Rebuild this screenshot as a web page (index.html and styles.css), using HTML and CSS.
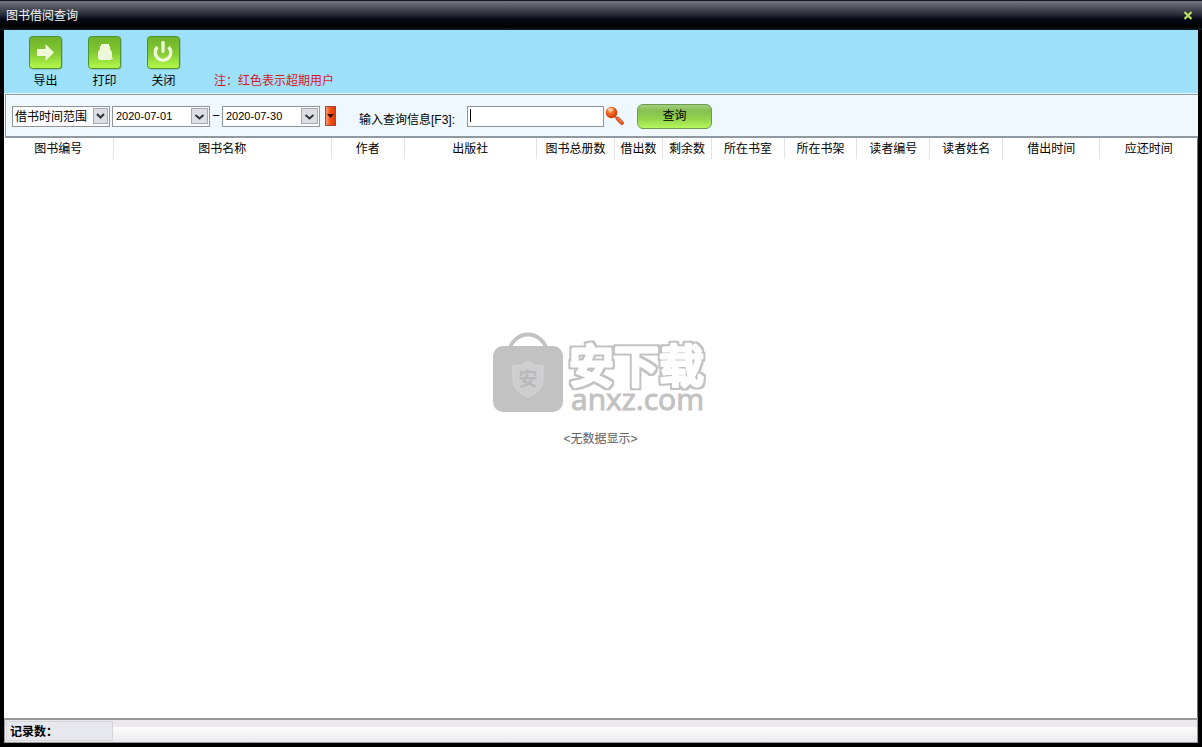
FILE: index.html
```html
<!DOCTYPE html>
<html lang="zh-CN">
<head>
<meta charset="utf-8">
<title>图书借阅查询</title>
<link rel="stylesheet" href="styles.css">
</head>
<body>
<div class="window">
  <header class="titlebar">
    <h1 class="title">图书借阅查询</h1>
    <button class="close" type="button" aria-label="关闭窗口">
      <svg width="10" height="10" viewBox="0 0 10 10"><path d="M1.500 1l7 7M8.500 1l-7 7" stroke="#bcdc62" stroke-width="2.200"/></svg>
    </button>
  </header>
  <main class="client">
    <div class="toolbar">
      <button class="tool" type="button">
        <svg class="tool-icon" width="34" height="34" viewBox="0 0 34 34">
          <defs><linearGradient id="green" x1="0" y1="0" x2="0" y2="1"><stop offset="0" stop-color="#6eb22a"/><stop offset=".5" stop-color="#82c931"/><stop offset="1" stop-color="#b4fa4c"/></linearGradient></defs>
          <rect x="1.500" y="1.500" width="32" height="32" rx="3" fill="#6e9b83" opacity=".7"/>
          <rect x=".5" y=".5" width="32" height="32" rx="3" fill="url(#green)" stroke="#4c9034"/>
          <path d="M8 13h8.500V8l8.500 8.500-8.500 8.500v-5H8z" fill="#edf8d8"/>
        </svg>
        <span>导出</span>
      </button>
      <button class="tool" type="button">
        <svg class="tool-icon" width="34" height="34" viewBox="0 0 34 34">
          <rect x="1.500" y="1.500" width="32" height="32" rx="3" fill="#6e9b83" opacity=".7"/>
          <rect x=".5" y=".5" width="32" height="32" rx="3" fill="url(#green)" stroke="#4c9034"/>
          <path d="M13 8h8v2h1v3l2 3v6h1v1h-2v1H11v-1h-1v-7l2-3v-3h1z" fill="#edf8d8"/>
        </svg>
        <span>打印</span>
      </button>
      <button class="tool" type="button">
        <svg class="tool-icon" width="34" height="34" viewBox="0 0 34 34">
          <rect x="1.500" y="1.500" width="32" height="32" rx="3" fill="#6e9b83" opacity=".7"/>
          <rect x=".5" y=".5" width="32" height="32" rx="3" fill="url(#green)" stroke="#4c9034"/>
          <path d="M10.500 11a7.800 7.800 0 1 0 11 0" fill="none" stroke="#edf8d8" stroke-width="3.400"/>
          <path d="M16 6.500v9" stroke="#edf8d8" stroke-width="3.400" stroke-linecap="round"/>
        </svg>
        <span>关闭</span>
      </button>
      <p class="note">注：红色表示超期用户</p>
    </div>
    <form class="filters" onsubmit="return false">
      <span class="combo">
        <select class="field" aria-label="时间范围类型"><option>借书时间范围</option></select>
        <svg class="arrow arrow-over" width="15" height="16" viewBox="0 0 15 16"><rect class="arrow-box" x=".5" y=".5" width="14" height="15"/><path class="arrow-mark" d="M4 6l3.500 3.500L11 6"/></svg>
      </span>
      <span class="date">
        <input class="date-input" type="text" value="2020-07-01" aria-label="开始日期">
        <button class="date-button" type="button" aria-label="选择开始日期"><svg class="arrow" width="17" height="16" viewBox="0 0 17 16"><rect class="arrow-box" x=".5" y=".5" width="16" height="15"/><path class="arrow-mark" d="M4.500 7l4 3.500 4-3.500"/></svg></button>
      </span>
      <span class="dash">–</span>
      <span class="date date-end">
        <input class="date-input" type="text" value="2020-07-30" aria-label="结束日期">
        <button class="date-button" type="button" aria-label="选择结束日期"><svg class="arrow" width="17" height="16" viewBox="0 0 17 16"><rect class="arrow-box" x=".5" y=".5" width="16" height="15"/><path class="arrow-mark" d="M4.500 7l4 3.500 4-3.500"/></svg></button>
      </span>
      <button class="range" type="button" aria-label="快速选择日期"><svg width="9" height="18" viewBox="0 0 9 18"><path d="M1 7h7L4.500 11z" fill="#3a0a00"/></svg></button>
      <label class="search-label" for="keyword">输入查询信息[F3]:</label>
      <input class="field search" id="keyword" type="text">
      <svg class="lens" width="20" height="20" viewBox="0 0 20 20">
        <defs><radialGradient id="glass" cx=".4" cy=".35" r=".65"><stop offset="0" stop-color="#ffb878"/><stop offset=".45" stop-color="#f2681c"/><stop offset="1" stop-color="#c93205"/></radialGradient></defs>
        <path d="M9.500 10.500l3 2" stroke="#d9835f" stroke-width="2"/>
        <path d="M12.500 12.500l4.500 4.500" stroke="#d9552c" stroke-width="4" stroke-linecap="round"/>
        <path d="M12.500 12l4 4" stroke="#f5a27e" stroke-width="1"/>
        <circle cx="6.500" cy="6.500" r="5.800" fill="url(#glass)"/>
        <ellipse cx="5.500" cy="3.500" rx="3" ry="1.800" fill="#ffe0c8" opacity=".65"/>
      </svg>
      <button class="query" type="submit">查询</button>
    </form>
    <section class="results">
      <table class="grid">
        <colgroup><col style="width:109px"><col style="width:218px"><col style="width:73px"><col style="width:132px"><col style="width:78px"><col style="width:48px"><col style="width:49px"><col style="width:73px"><col style="width:72px"><col style="width:73px"><col style="width:73px"><col style="width:97px"><col style="width:97px"></colgroup>
        <thead><tr><th>图书编号</th><th>图书名称</th><th>作者</th><th>出版社</th><th>图书总册数</th><th>借出数</th><th>剩余数</th><th>所在书室</th><th>所在书架</th><th>读者编号</th><th>读者姓名</th><th>借出时间</th><th>应还时间</th></tr></thead>
      </table>
      <div class="empty">
        <svg class="watermark" width="216" height="92" viewBox="0 0 216 92">
          <path d="M17 18C20 8 28 2.500 36 2.500S52 8 55 18" fill="none" stroke="#c2c2c2" stroke-width="4"/>
          <rect x="1" y="14" width="70" height="66" rx="10" fill="#c2c2c2"/>
          <path d="M36 29c5 4 10 5 15 5v14c0 8-6 13-15 17-9-4-15-9-15-17V34c5 0 10-1 15-5z" fill="#cecece" stroke="#d6d6d6"/>
          <text class="wm-badge" x="36" y="54" text-anchor="middle">安</text>
          <filter id="ring" x="-5%" y="-10%" width="110%" height="120%" color-interpolation-filters="sRGB">
            <feMorphology in="SourceAlpha" operator="dilate" radius="1.500" result="wide"/>
            <feFlood flood-color="#c2c2c2"/>
            <feComposite in2="wide" operator="in" result="gray"/>
            <feMerge><feMergeNode in="gray"/><feMergeNode in="SourceGraphic"/></feMerge>
          </filter>
          <text class="wm-name" x="77" y="51" filter="url(#ring)">安下载</text>
          <text class="wm-site" x="79" y="78">anxz.com</text>
        </svg>
        <p class="empty-text">&lt;无数据显示&gt;</p>
      </div>
    </section>
    <footer class="status"><strong class="count">记录数：</strong></footer>
  </main>
</div>
</body>
</html>
```
FILE: styles.css
```css
* { box-sizing: border-box; }

body {
  margin: 0;
  font: 12px/16px "Liberation Sans", "Noto Sans CJK SC", sans-serif;
  color: #000;
}

button, input, select { margin: 0; font: inherit; color: inherit; }
button { padding: 0; border: 0; background: none; }
svg { display: block; }
p { margin: 0; }

.window {
  display: flex;
  flex-direction: column;
  min-height: 100vh;
  padding: 0 4px 4px;
  background: #000;
}

.titlebar {
  display: flex;
  align-items: center;
  justify-content: space-between;
  height: 30px;
  margin: 0 -4px;
  padding: 0 9px 0 6px;
  border-top: 1px solid #15161c;
  background: linear-gradient(#74767f 0, #4b4e58 25%, #252935 48%, #080c16 62%, #000 90%, #14242e 100%);
}

.title { margin: 0; font-size: 12px; font-weight: 400; color: #f4f4f4; }

.client { display: flex; flex: 1; flex-direction: column; background: #fff; }

.toolbar {
  display: flex;
  height: 64px;
  padding: 6px 0 0 12px;
  border-bottom: 1px solid #e8f7fd;
  background: #9de0fa;
}

.tool {
  display: flex;
  flex-direction: column;
  align-items: center;
  gap: 3px;
  width: 59px;
}

.note { align-self: flex-end; margin-left: 21px; padding-bottom: 4px; color: #d8141c; }

.filters {
  display: flex;
  align-items: center;
  height: 44px;
  margin-left: 1px;
  padding: 1px 0 0 6px;
  border: solid #8f999f;
  border-width: 1px 0 2px 1px;
  background: #f0f8ff;
}

.field, .date {
  height: 21px;
  border: 1px solid #8e9499;
  border-radius: 0;
  outline: 0;
  background: #fff;
}

.combo { position: relative; width: 98px; }
.combo .field { display: block; width: 100%; padding: 1px 0 0 2px; appearance: none; }

.arrow-over { position: absolute; top: 2px; right: 2px; pointer-events: none; }
.arrow-box { fill: #dcdde5; stroke: #a6a9b3; }
.arrow-mark { fill: none; stroke: #32343c; stroke-width: 2; }

.date { display: flex; align-items: center; width: 98px; margin-left: 2px; padding-right: 1px; }
.date-end { margin-left: 0; }
.date-input { flex: 1; min-width: 0; padding: 0 0 0 3px; border: 0; outline: 0; background: none; font-size: 11px; }

.dash { width: 12px; padding-bottom: 2px; text-align: center; }

.range {
  display: flex;
  align-items: center;
  justify-content: center;
  width: 11px;
  height: 20px;
  margin-left: 5px;
  border: 1px solid #a84a30;
  background: linear-gradient(90deg, #ff9b70, #f4511c 45%, #dc3c0c);
}

.search-label { margin: 7px 12px 0 23px; }

/* The leading bar marks the text position while the box is idle. */
.search {
  width: 137px;
  padding: 0 2px;
  background: linear-gradient(#000, #000) 2px 2px / 1px 13px no-repeat #fff;
}
.search:focus { background: #fff; }
.lens { margin-left: 1px; }

.query {
  width: 75px;
  height: 25px;
  margin-left: 12px;
  border: 1px solid #6b9a50;
  border-radius: 6px;
  background: linear-gradient(#a3cf7c, #86bf52 25%, #8fcf4c 55%, #b6f75c);
}

.results {
  display: flex;
  flex: 1;
  flex-direction: column;
  border-right: 1px solid #777;
}

.grid { width: 100%; border-collapse: collapse; table-layout: fixed; }
.grid th { height: 21px; padding: 0; border-right: 1px solid #e2e2e6; font-weight: 400; white-space: nowrap; }
.grid th:last-child { border-right: 0; }

.empty { position: relative; display: flex; flex: 1; align-items: center; justify-content: center; }
.empty-text { color: #606060; }
.watermark { position: absolute; bottom: calc(50% + 15px); left: calc(50% - 109px); }
.wm-badge { font: 700 19px "Noto Sans CJK SC", sans-serif; fill: #b9b9b9; }
.wm-name {
  font: 500 45px "Noto Sans CJK SC", sans-serif;
  fill: #fff;
  stroke: #fff;
  stroke-width: 3px;
  stroke-linejoin: round;
}
.wm-site { font: 30px "Open Sans", sans-serif; fill: #c2c2c2; stroke: #c2c2c2; stroke-width: 1px; }

.status {
  display: flex;
  height: 25px;
  padding: 1px 1px;
  border: solid #999;
  border-width: 2px 1px 1px;
  background: linear-gradient(#ebe9ed 30%, #fcfcfc 30%, #ebe9ed);
}
.count { width: 107px; padding-left: 3px; border: 1px solid #d5d6da; background: #e6e8ed; line-height: 20px; }
```
